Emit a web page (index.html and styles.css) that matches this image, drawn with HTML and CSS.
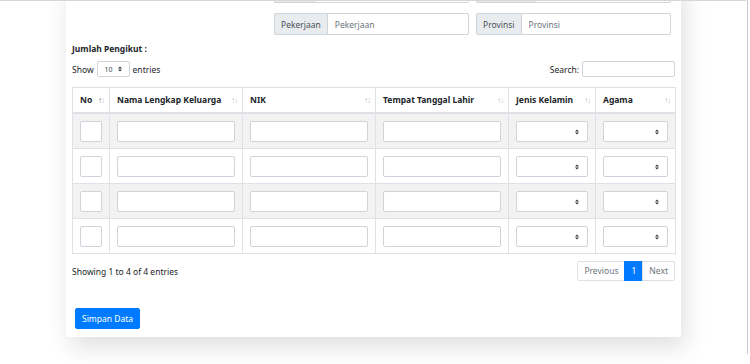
FILE: index.html
```html
<html>
<head>
    <title>Data Pengikut</title>
    <link rel="stylesheet" href="styles.css">
</head>
<body>
    <div class="page">
        <div class="card">
            <div class="formGrid">
                <div></div>
                <div class="inputGroup">
                    <span class="prepend">Alamat</span>
                    <input class="formControl" type="text" placeholder="Alamat">
                </div>
                <div class="inputGroup">
                    <span class="prepend">Kecamatan</span>
                    <input class="formControl" type="text" placeholder="Kecamatan">
                </div>
                <div></div>
                <div class="inputGroup">
                    <span class="prepend">Pekerjaan</span>
                    <input class="formControl" type="text" placeholder="Pekerjaan">
                </div>
                <div class="inputGroup">
                    <span class="prepend">Provinsi</span>
                    <input class="formControl" type="text" placeholder="Provinsi">
                </div>
            </div>

            <div class="sectionTitle">Jumlah Pengikut :</div>

            <div class="dtTop">
                <label class="dtLength">Show
                    <select class="smallSelect">
                        <option>10</option>
                        <option>25</option>
                        <option>50</option>
                    </select>
                    entries</label>
                <label class="dtSearch">Search: <input type="search" class="searchInput"></label>
            </div>

            <table class="dataTable">
                <colgroup>
                    <col style="width:37px">
                    <col style="width:133px">
                    <col style="width:133px">
                    <col style="width:133px">
                    <col style="width:87px">
                    <col style="width:80px">
                </colgroup>
                <thead>
                    <tr>
                        <th><div class="thInner">No <span class="sort"><span class="asc">&#8593;</span><span>&#8595;</span></span></div></th>
                        <th><div class="thInner">Nama Lengkap Keluarga <span class="sort"><span>&#8593;</span><span>&#8595;</span></span></div></th>
                        <th><div class="thInner">NIK <span class="sort"><span>&#8593;</span><span>&#8595;</span></span></div></th>
                        <th><div class="thInner">Tempat Tanggal Lahir <span class="sort"><span>&#8593;</span><span>&#8595;</span></span></div></th>
                        <th><div class="thInner">Jenis Kelamin <span class="sort"><span>&#8593;</span><span>&#8595;</span></span></div></th>
                        <th><div class="thInner">Agama <span class="sort"><span>&#8593;</span><span>&#8595;</span></span></div></th>
                    </tr>
                </thead>
                <tbody id="rows">
                </tbody>
            </table>

            <div class="dtBottom">
                <div class="dtInfo">Showing 1 to 4 of 4 entries</div>
                <ul class="pagination">
                    <li class="pageItem disabled">Previous</li>
                    <li class="pageItem active">1</li>
                    <li class="pageItem disabled">Next</li>
                </ul>
            </div>

            <button class="btnPrimary">Simpan Data</button>
        </div>
    </div>
    <div class="topEdge"></div>
    <div class="scrollEdge"></div>

    <script type="text/javascript">
        var rows = document.getElementById("rows");
        for(var i = 0;i<4;i++)
        {
            rows.innerHTML += "<tr>"
                + "<td><input class='formControl' type='text'></td>"
                + "<td><input class='formControl' type='text'></td>"
                + "<td><input class='formControl' type='text'></td>"
                + "<td><input class='formControl' type='text'></td>"
                + "<td><select class='formSelect'><option></option><option>Laki-laki</option><option>Perempuan</option></select></td>"
                + "<td><select class='formSelect'><option></option><option>Islam</option><option>Kristen</option></select></td>"
                + "</tr>";
        }
    </script>
</body>
</html>
```

FILE: styles.css
```css
body {
    margin: 0;
    background-color: #ffffff;
    font-family: "Noto Sans", "Open Sans", sans-serif;
    font-size: 8.5px;
    color: #212529;
    overflow: hidden;
}
.page {
    padding-left: 66px;
}
.card {
    width: 603px;
    margin-top: -19px;
    padding: 0 6px 8px 6px;
    background-color: #ffffff;
    box-shadow: 4px 10px 24px rgba(0,0,0,0.13);
    border-radius: 0 0 3px 3px;
}
.formGrid {
    width: 599px;
    display: grid;
    grid-template-columns: 195px 195px 195px;
    column-gap: 7px;
    row-gap: 10px;
}
.inputGroup {
    display: flex;
    height: 22px;
}
.prepend {
    display: flex;
    align-items: center;
    padding: 0 6px;
    background-color: #e9ecef;
    border: 1px solid #ced4da;
    border-right: none;
    border-radius: 2px 0 0 2px;
    color: #495057;
    white-space: nowrap;
}
.formControl {
    box-sizing: border-box;
    width: 100%;
    height: 21px;
    padding: 0 7px;
    border: 1px solid #ced4da;
    border-radius: 2px;
    font-family: inherit;
    font-size: 8.5px;
    color: #495057;
    background-color: #ffffff;
    vertical-align: top;
}
.inputGroup .formControl {
    height: 22px;
    flex: 1;
    min-width: 0;
    border-radius: 0 2px 2px 0;
}
.formControl::placeholder {
    color: #6c757d;
}
.sectionTitle {
    margin-top: 7px;
    font-weight: 700;
    line-height: 14px;
}
.dtTop {
    margin-top: 5px;
    display: flex;
    justify-content: space-between;
    align-items: center;
    height: 16px;
}
.dtLength, .dtSearch {
    display: flex;
    align-items: center;
    gap: 3px;
}
.smallSelect {
    appearance: none;
    box-sizing: border-box;
    width: 33px;
    height: 16px;
    padding: 0 0 0 7px;
    border: 1px solid #ced4da;
    border-radius: 2px;
    font-family: inherit;
    font-size: 7px;
    color: #495057;
    background: #ffffff url("data:image/svg+xml,%3csvg xmlns='http://www.w3.org/2000/svg' width='4' height='5' viewBox='0 0 4 5'%3e%3cpath fill='%23343a40' d='M2 0L0 2h4zm0 5L0 3h4z'/%3e%3c/svg%3e") no-repeat right 7px center;
    background-size: 4px 6px;
}
.searchInput {
    box-sizing: border-box;
    width: 93px;
    height: 16px;
    border: 1px solid #ced4da;
    border-radius: 2px;
}
.dataTable {
    margin-top: 10px;
    width: 603px;
    table-layout: fixed;
    border-collapse: collapse;
    border: 1px solid #dee2e6;
    font-size: 8.5px;
    color: #212529;
}
.dataTable th {
    padding: 5px 5px 5px 7px;
    border: 1px solid #dee2e6;
    border-bottom: 2px solid #dee2e6;
    text-align: left;
    font-weight: 700;
    line-height: 14px;
}
.thInner {
    display: flex;
    justify-content: space-between;
    align-items: center;
    white-space: nowrap;
}
.sort {
    display: flex;
    font-size: 8px;
    font-weight: 400;
    color: #bcc0c4;
    letter-spacing: -1px;
}
.sort .asc {
    color: #6f7479;
}
.dataTable td {
    padding: 7px 7px 6px 7px;
    border: 1px solid #dee2e6;
    height: 21px;
}
.dataTable tbody tr:nth-child(odd) {
    background-color: #f2f2f2;
}
.formSelect {
    appearance: none;
    box-sizing: border-box;
    width: 100%;
    height: 21px;
    border: 1px solid #ced4da;
    border-radius: 2px;
    vertical-align: top;
    background: #ffffff url("data:image/svg+xml,%3csvg xmlns='http://www.w3.org/2000/svg' width='4' height='5' viewBox='0 0 4 5'%3e%3cpath fill='%23343a40' d='M2 0L0 2h4zm0 5L0 3h4z'/%3e%3c/svg%3e") no-repeat right 8px center;
    background-size: 4px 6px;
}
.dtBottom {
    margin-top: 7px;
    display: flex;
    justify-content: space-between;
    align-items: center;
}
.pagination {
    list-style: none;
    margin: 0;
    padding: 0;
    display: flex;
}
.pageItem {
    height: 18px;
    line-height: 18px;
    padding: 0 6px;
    border: 1px solid #dee2e6;
    margin-left: -1px;
    color: #6c757d;
    background-color: #ffffff;
}
.pageItem:first-child {
    border-radius: 2px 0 0 2px;
}
.pageItem:last-child {
    border-radius: 0 2px 2px 0;
}
.pageItem.active {
    background-color: #007bff;
    border-color: #007bff;
    color: #ffffff;
    padding: 0 6px;
}
.btnPrimary {
    margin-top: 27px;
    margin-left: 3px;
    height: 21px;
    padding: 0 6px;
    border: 1px solid #007bff;
    border-radius: 2px;
    background-color: #007bff;
    color: #ffffff;
    font-family: inherit;
    font-size: 8.5px;
}
.topEdge {
    position: fixed;
    top: 0;
    left: 0;
    width: 746px;
    height: 1px;
    background-color: #d6d6d6;
}
.scrollEdge {
    position: fixed;
    top: 0;
    right: 2px;
    width: 1px;
    height: 354px;
    background-color: #c8c8c8;
}
```
